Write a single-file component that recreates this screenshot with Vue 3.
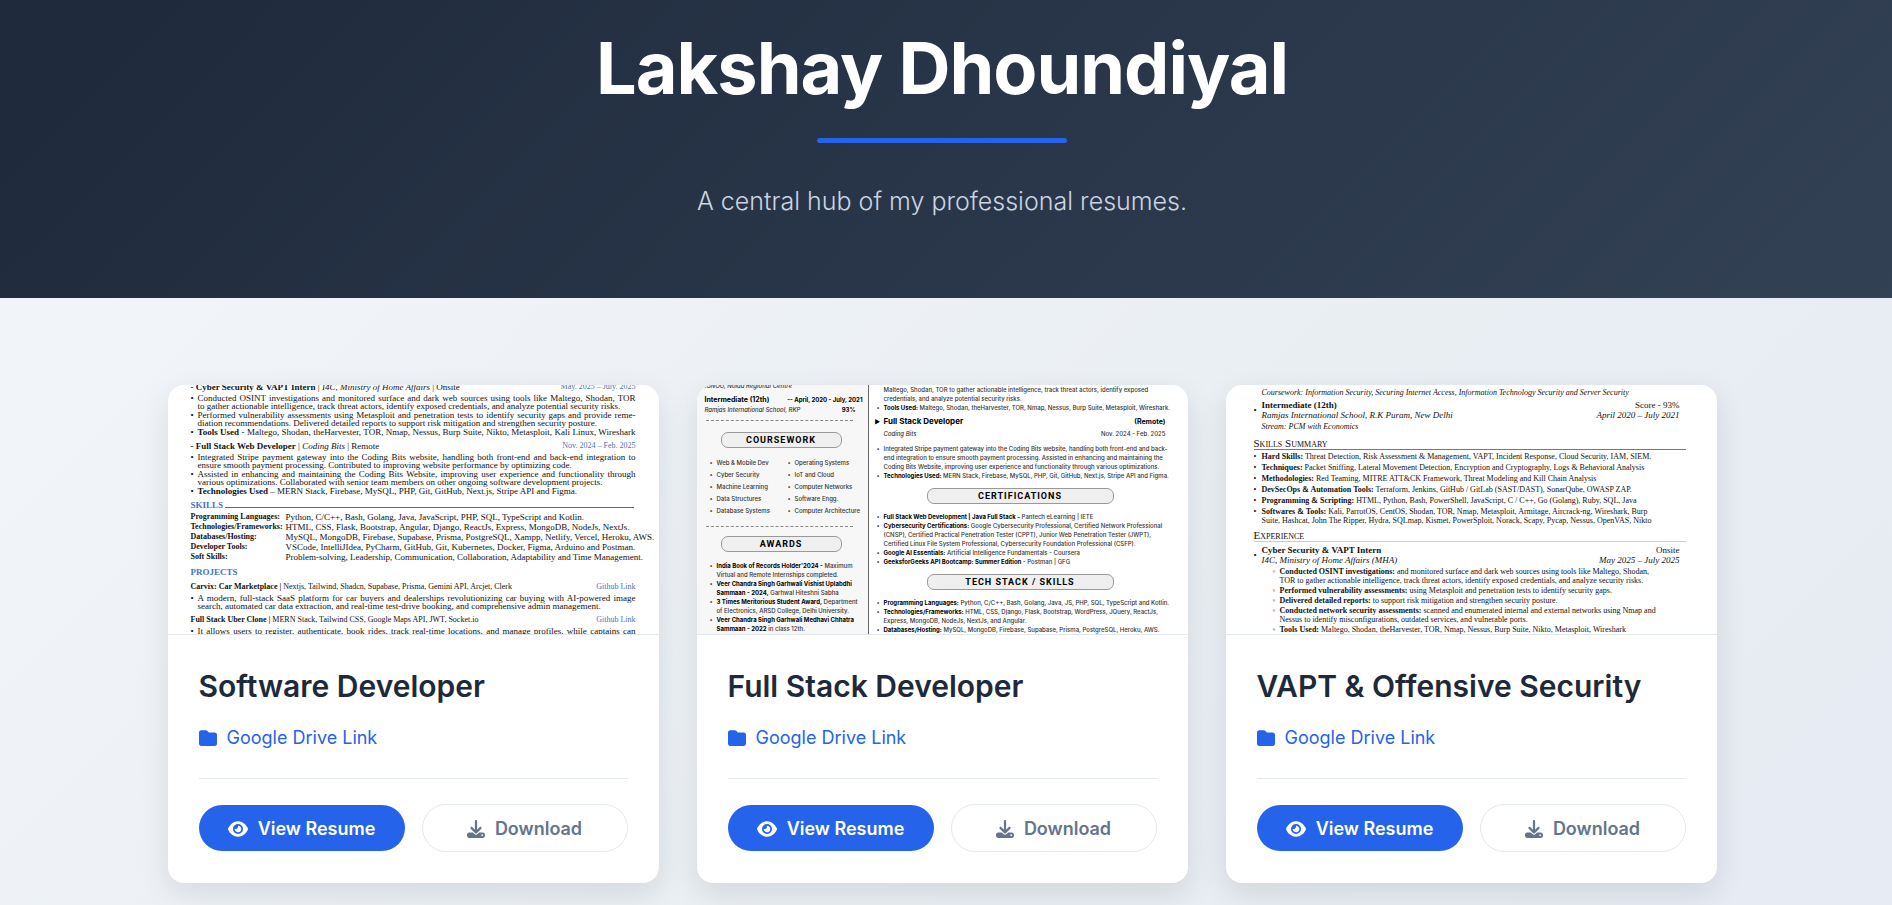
<template>
  <div class="page">
    <header class="hero">
      <h1>Lakshay Dhoundiyal</h1>
      <span class="underline"></span>
      <p>A central hub of my professional resumes.</p>
    </header>

    <main class="cards">
      <article v-for="card in cards" :key="card.id" class="card">
        <div v-if="card.id === 'software'" class="preview latex">
          <div class="row head">
            <span><b>- Cyber Security &amp; VAPT Intern</b> | <i>I4C, Ministry of Home Affairs</i> | Onsite</span>
            <span class="blue">May. 2025 – July. 2025</span>
          </div>
          <ul>
            <li>
              <span class="line full">Conducted OSINT investigations and monitored surface and dark web sources using tools like Maltego, Shodan, TOR</span>
              <span class="line">to gather actionable intelligence, track threat actors, identify exposed credentials, and analyze potential security risks.</span>
            </li>
            <li>
              <span class="line full">Performed vulnerability assessments using Metasploit and penetration tests to identify security gaps and provide reme-</span>
              <span class="line">diation recommendations. Delivered detailed reports to support risk mitigation and strengthen security posture.</span>
            </li>
            <li>
              <span class="line full"><b>Tools Used</b> - Maltego, Shodan, theHarvester, TOR, Nmap, Nessus, Burp Suite, Nikto, Metasploit, Kali Linux, Wireshark</span>
            </li>
          </ul>
          <div class="row job">
            <span><b>- Full Stack Web Developer</b> | <i>Coding Bits</i> | Remote</span>
            <span class="blue">Nov. 2024 – Feb. 2025</span>
          </div>
          <ul>
            <li>
              <span class="line full">Integrated Stripe payment gateway into the Coding Bits website, handling both front-end and back-end integration to</span>
              <span class="line">ensure smooth payment processing. Contributed to improving website performance by optimizing code.</span>
            </li>
            <li>
              <span class="line full">Assisted in enhancing and maintaining the Coding Bits Website, improving user experience and functionality through</span>
              <span class="line">various optimizations. Collaborated with senior team members on other ongoing software development projects.</span>
            </li>
            <li>
              <span class="line"><b>Technologies Used</b> – MERN Stack, Firebase, MySQL, PHP, Git, GitHub, Next.js, Stripe API and Figma.</span>
            </li>
          </ul>
          <div class="section ruled">SKILLS</div>
          <dl>
            <template v-for="skill in softwareSkills" :key="skill.label">
              <dt>{{ skill.label }}:</dt>
              <dd>{{ skill.value }}</dd>
            </template>
          </dl>
          <div class="section">PROJECTS</div>
          <div class="row project">
            <span><b>Carvix: Car Marketplace |</b> Nextjs, Tailwind, Shadcn, Supabase, Prisma, Gemini API, Arcjet, Clerk</span>
            <span class="blue">Github Link</span>
          </div>
          <ul>
            <li>
              <span class="line full">A modern, full-stack SaaS platform for car buyers and dealerships revolutionizing car buying with AI-powered image</span>
              <span class="line">search, automated car data extraction, and real-time test-drive booking, and comprehensive admin management.</span>
            </li>
          </ul>
          <div class="row project next">
            <span><b>Full Stack Uber Clone |</b> MERN Stack, Tailwind CSS, Google Maps API, JWT, Socket.io</span>
            <span class="blue">Github Link</span>
          </div>
          <ul>
            <li>
              <span class="line full">It allows users to register, authenticate, book rides, track real-time locations, and manage profiles, while captains can</span>
            </li>
          </ul>
        </div>

        <div v-else-if="card.id === 'fullstack'" class="preview split">
          <div class="side">
            <div class="campus"><i>IGNOU, Noida Regional Centre</i></div>
            <div class="row degree"><b>Intermediate (12th)</b><b class="small">-- April, 2020 - July, 2021</b></div>
            <div class="row school"><i>Ramjas International School, RKP</i><b class="small">93%</b></div>
            <div class="dashes"></div>
            <div class="pill">COURSEWORK</div>
            <div class="courses">
              <ul>
                <li v-for="course in courses[0]" :key="course">{{ course }}</li>
              </ul>
              <ul>
                <li v-for="course in courses[1]" :key="course">{{ course }}</li>
              </ul>
            </div>
            <div class="dashes"></div>
            <div class="pill awards-pill">AWARDS</div>
            <ul class="awards">
              <li><b>India Book of Records Holder'2024 -</b> Maximum<br />Virtual and Remote Internships completed.</li>
              <li><b>Veer Chandra Singh Garhwali Vishist Uplabdhi<br />Sammaan - 2024,</b> Garhwal Hiteshni Sabha</li>
              <li><b>3 Times Meritorious Student Award,</b> Department<br />of Electronics, ARSD College, Delhi University.</li>
              <li><b>Veer Chandra Singh Garhwali Medhavi Chhatra<br />Sammaan - 2022</b> in class 12th.</li>
            </ul>
          </div>
          <div class="body">
            <ul>
              <li class="bare">Maltego, Shodan, TOR to gather actionable intelligence, track threat actors, identify exposed<br />credentials, and analyze potential security risks.</li>
              <li><b>Tools Used:</b> Maltego, Shodan, theHarvester, TOR, Nmap, Nessus, Burp Suite, Metasploit, Wireshark.</li>
            </ul>
            <div class="row role"><b>Full Stack Developer</b><b class="small">(Remote)</b></div>
            <div class="row employer"><i>Coding Bits</i><span>Nov. 2024 - Feb. 2025</span></div>
            <ul>
              <li>Integrated Stripe payment gateway into the Coding Bits website, handling both front-end and back-<br />end integration to ensure smooth payment processing. Assisted in enhancing and maintaining the<br />Coding Bits Website, improving user experience and functionality through various optimizations.</li>
              <li><b>Technologies Used:</b> MERN Stack, Firebase, MySQL, PHP, Git, GitHub, Next.js, Stripe API and Figma.</li>
            </ul>
            <div class="pill wide">CERTIFICATIONS</div>
            <ul>
              <li><b>Full Stack Web Development | Java Full Stack -</b> Pantech eLearning | IETE</li>
              <li><b>Cybersecurity Certifications:</b> Google Cybersecurity Professional, Certified Network Professional<br />(CNSP), Certified Practical Penetration Tester (CPPT), Junior Web Penetration Tester (JWPT),<br />Certified Linux File System Professional, Cybersecurity Foundation Professional (CSFP).</li>
              <li><b>Google AI Essentials:</b> Artificial Intelligence Fundamentals - Coursera</li>
              <li><b>GeeksforGeeks API Bootcamp: Summer Edition</b> - Postman | GFG</li>
            </ul>
            <div class="pill wide">TECH STACK / SKILLS</div>
            <ul>
              <li><b>Programming Languages:</b> Python, C/C++, Bash, Golang, Java, JS, PHP, SQL, TypeScript and Kotlin.</li>
              <li><b>Technologies/Frameworks:</b> HTML, CSS, Django, Flask, Bootstrap, WordPress, JQuery, ReactJs,<br />Express, MongoDB, NodeJs, NextJs, and Angular.</li>
              <li><b>Databases/Hosting:</b> MySQL, MongoDB, Firebase, Supabase, Prisma, PostgreSQL, Heroku, AWS.</li>
            </ul>
          </div>
        </div>

        <div v-else class="preview academic">
          <div class="coursework"><i>Coursework: Information Security, Securing Internet Access, Information Technology Security and Server Security</i></div>
          <div class="entry">
            <div class="row"><b>Intermediate (12th)</b><span>Score - 93%</span></div>
            <div class="row"><i>Ramjas International School, R.K Puram, New Delhi</i><i>April 2020 – July 2021</i></div>
          </div>
          <div class="stream"><i>Stream: PCM with Economics</i></div>
          <div class="caps">Skills Summary</div>
          <ul class="skills">
            <li v-for="skill in securitySkills" :key="skill.label"><b>{{ skill.label }}:</b> {{ skill.value }}</li>
            <li><b>Softwares &amp; Tools:</b> Kali, ParrotOS, CentOS, Shodan, TOR, Nmap, Metasploit, Armitage, Aircrack-ng, Wireshark, Burp<br />Suite, Hashcat, John The Ripper, Hydra, SQLmap, Kismet, PowerSploit, Norack, Scapy, Pycap, Nessus, OpenVAS, Nikto</li>
          </ul>
          <div class="caps light">Experience</div>
          <div class="entry intern">
            <div class="row"><b>Cyber Security &amp; VAPT Intern</b><span>Onsite</span></div>
            <div class="row"><i>I4C, Ministry of Home Affairs (MHA)</i><i>May 2025 – July 2025</i></div>
          </div>
          <ul class="duties">
            <li><b>Conducted OSINT investigations:</b> and monitored surface and dark web sources using tools like Maltego, Shodan,<br />TOR to gather actionable intelligence, track threat actors, identify exposed credentials, and analyze security risks.</li>
            <li><b>Performed vulnerability assessments:</b> using Metasploit and penetration tests to identify security gaps.</li>
            <li><b>Delivered detailed reports:</b> to support risk mitigation and strengthen security posture.</li>
            <li><b>Conducted network security assessments:</b> scanned and enumerated internal and external networks using Nmap and<br />Nessus to identify misconfigurations, outdated services, and vulnerable ports.</li>
            <li><b>Tools Used:</b> Maltego, Shodan, theHarvester, TOR, Nmap, Nessus, Burp Suite, Nikto, Metasploit, Wireshark</li>
          </ul>
        </div>

        <div class="content">
          <h2>{{ card.title }}</h2>
          <a href="#" class="drive">
            <svg viewBox="0 0 512 512" width="18" height="18" aria-hidden="true">
              <path fill="currentColor" d="M64 480H448c35.300 0 64-28.700 64-64V160c0-35.300-28.700-64-64-64H288c-10.100 0-19.600-4.700-25.600-12.800L243.200 57.600C231.100 41.500 212.100 32 192 32H64C28.700 32 0 60.700 0 96V416c0 35.300 28.700 64 64 64z" />
            </svg>
            Google Drive Link
          </a>
          <div class="actions">
            <button type="button" class="btn primary">
              <svg viewBox="0 0 576 512" width="20" height="18" aria-hidden="true">
                <path fill="currentColor" d="M288 32c-80.800 0-145.500 36.800-192.600 80.600C48.600 156 17.300 208 2.500 243.700c-3.300 7.900-3.300 16.700 0 24.600C17.300 304 48.600 356 95.400 399.400C142.500 443.200 207.200 480 288 480s145.500-36.800 192.600-80.600c46.800-43.500 78.100-95.400 93-131.100c3.300-7.900 3.300-16.700 0-24.600c-14.900-35.700-46.200-87.700-93-131.100C433.500 68.800 368.800 32 288 32zM144 256a144 144 0 1 1 288 0 144 144 0 1 1-288 0zm144-64c0 35.300-28.700 64-64 64c-7.100 0-13.900-1.200-20.300-3.300c-5.500-1.800-11.900 1.600-11.700 7.400c.3 6.900 1.300 13.800 3.200 20.700c13.700 51.200 66.400 81.600 117.600 67.900s81.600-66.400 67.900-117.600c-11.100-41.500-47.800-69.400-88.600-71.100c-5.800-.2-9.200 6.100-7.400 11.700c2.100 6.400 3.300 13.200 3.300 20.300z" />
              </svg>
              View Resume
            </button>
            <button type="button" class="btn outline">
              <svg viewBox="0 0 512 512" width="18" height="18" aria-hidden="true">
                <path fill="currentColor" d="M288 32c0-17.700-14.300-32-32-32s-32 14.300-32 32V274.700l-73.400-73.400c-12.500-12.500-32.800-12.500-45.300 0s-12.500 32.800 0 45.300l128 128c12.500 12.500 32.800 12.500 45.300 0l128-128c12.500-12.500 12.500-32.800 0-45.300s-32.800-12.500-45.300 0L288 274.700V32zM64 352c-35.300 0-64 28.700-64 64v32c0 35.300 28.700 64 64 64H448c35.300 0 64-28.700 64-64V416c0-35.300-28.700-64-64-64H346.500l-45.300 45.300c-25 25-65.500 25-90.500 0L165.500 352H64zm368 56a24 24 0 1 1 0 48 24 24 0 1 1 0-48z" />
              </svg>
              Download
            </button>
          </div>
        </div>
      </article>
    </main>
  </div>
</template>

<script setup>
const cards = [
  { id: 'software', title: 'Software Developer' },
  { id: 'fullstack', title: 'Full Stack Developer' },
  { id: 'security', title: 'VAPT & Offensive Security' },
];

const softwareSkills = [
  { label: 'Programming Languages', value: 'Python, C/C++, Bash, Golang, Java, JavaScript, PHP, SQL, TypeScript and Kotlin.' },
  { label: 'Technologies/Frameworks', value: 'HTML, CSS, Flask, Bootstrap, Angular, Django, ReactJs, Express, MongoDB, NodeJs, NextJs.' },
  { label: 'Databases/Hosting', value: 'MySQL, MongoDB, Firebase, Supabase, Prisma, PostgreSQL, Xampp, Netlify, Vercel, Heroku, AWS.' },
  { label: 'Developer Tools', value: 'VSCode, IntelliJIdea, PyCharm, GitHub, Git, Kubernetes, Docker, Figma, Arduino and Postman.' },
  { label: 'Soft Skills', value: 'Problem-solving, Leadership, Communication, Collaboration, Adaptability and Time Management.' },
];

const courses = [
  ['Web & Mobile Dev', 'Cyber Security', 'Machine Learning', 'Data Structures', 'Database Systems'],
  ['Operating Systems', 'IoT and Cloud', 'Computer Networks', 'Software Engg.', 'Computer Architecture'],
];

const securitySkills = [
  { label: 'Hard Skills', value: 'Threat Detection, Risk Assessment & Management, VAPT, Incident Response, Cloud Security, IAM, SIEM.' },
  { label: 'Techniques', value: 'Packet Sniffing, Lateral Movement Detection, Encryption and Cryptography, Logs & Behavioral Analysis' },
  { label: 'Methodologies', value: 'Red Teaming, MITRE ATT&CK Framework, Threat Modeling and Kill Chain Analysis' },
  { label: 'DevSecOps & Automation Tools', value: 'Terraform, Jenkins, GitHub / GitLab (SAST/DAST), SonarQube, OWASP ZAP.' },
  { label: 'Programming & Scripting', value: 'HTML, Python, Bash, PowerShell, JavaScript, C / C++, Go (Golang), Ruby, SQL, Java' },
];
</script>

<style>
body {
  margin: 0;
}
</style>

<style scoped>
.page {
  min-height: 100vh;
  background: linear-gradient(135deg, #f3f6fb 0%, #e9eef3 65%, #e6ebf4 100%);
  font-family: Inter, "Liberation Sans", sans-serif;
  color: #1e293b;
}

.hero {
  padding: 24px 8px 77px 0;
  display: flex;
  flex-direction: column;
  align-items: center;
  background: linear-gradient(135deg, #1e293b 0%, #334155 100%);
}

h1 {
  margin: 0;
  font-size: 72px;
  line-height: 88px;
  font-weight: 700;
  letter-spacing: -1px;
  color: #fff;
}

.underline {
  width: 250px;
  height: 5px;
  margin-top: 26px;
  border-radius: 3px;
  background: #2563eb;
}

.hero p {
  margin: 38px 0 0;
  font-size: 25px;
  line-height: 40px;
  font-weight: 300;
  color: #cbd5e1;
}

.cards {
  max-width: 1549px;
  margin: 0 auto;
  padding: 87px 8px 22px 0;
  display: grid;
  grid-template-columns: repeat(3, minmax(0, 1fr));
  gap: 38px;
}

.card {
  overflow: hidden;
  border-radius: 16px;
  background: #fff;
  box-shadow: 0 10px 30px rgba(0, 0, 0, 0.1);
}

.content {
  padding: 32px 31px 31px;
}

h2 {
  margin: 0;
  font-size: 30px;
  line-height: 38px;
  font-weight: 600;
}

.drive {
  display: flex;
  align-items: center;
  gap: 10px;
  margin-top: 17px;
  font-size: 18px;
  line-height: 32px;
  color: #2563eb;
  text-decoration: none;
}

.actions {
  display: grid;
  grid-template-columns: 1fr 1fr;
  align-items: center;
  gap: 17px;
  margin-top: 24px;
  padding-top: 25px;
  border-top: 1px solid #e2e8f0;
}

.btn {
  display: flex;
  align-items: center;
  justify-content: center;
  gap: 10px;
  height: 46px;
  padding: 2px 0 0;
  border: none;
  border-radius: 24px;
  font: 600 18px/22px Inter, "Liberation Sans", sans-serif;
  cursor: pointer;
}

.primary {
  background: #2563eb;
  color: #fff;
}

.outline {
  height: 48px;
  border: 1px solid #e2e8f0;
  background: transparent;
  color: #64748b;
}

/* resume previews */
.preview {
  box-sizing: border-box;
  height: 250px;
  overflow: hidden;
  border-bottom: 1px solid #e2e8f0;
  white-space: nowrap;
  color: #111;
}

.preview ul,
.preview dl {
  margin: 0;
  padding: 0;
  list-style: none;
}

.preview dd {
  margin: 0;
}

.row {
  display: flex;
  justify-content: space-between;
}

.blue {
  font-size: 8px;
  color: #4472c4;
}

.latex {
  padding: 0 23px;
  font: 9px/8px "Liberation Serif", serif;
}

.latex .head {
  margin-top: -2px;
}

.latex ul {
  display: grid;
  gap: 1px;
  margin-top: 3px;
}

.latex li {
  position: relative;
  padding-left: 7px;
}

.latex li::before {
  content: "•";
  position: absolute;
  left: 0;
}

.line {
  display: block;
}

.full {
  text-align-last: justify;
}

.latex .job {
  margin-top: 6px;
}

.section {
  display: flex;
  align-items: center;
  gap: 2px;
  margin-top: 6px;
  line-height: 8px;
  font-weight: 700;
  color: #4472c4;
}

.ruled::after {
  content: "";
  flex: 1;
  height: 1px;
  margin: 4px 2px 0 0;
  background: #666;
}

.latex dl {
  display: grid;
  grid-template-columns: 95px 1fr;
  margin-top: 3px;
  line-height: 10px;
}

.latex dt {
  font-size: 8px;
  font-weight: 700;
}

.latex .project {
  margin-top: 7px;
  font-size: 8px;
}

.latex .next {
  margin-top: 6px;
}

.split {
  display: flex;
  font: 500 6px/9px Inter, sans-serif;
  color: #333;
}

.split b {
  color: #000;
}

.side {
  box-sizing: border-box;
  width: 172px;
  padding: 0 5px 0 8px;
  border-right: 1px solid #666;
  background: #f7f7f7;
}

.body {
  flex: 1;
  padding-left: 8px;
}

.campus {
  margin-top: -4px;
}

.degree {
  margin-top: 5px;
  font-size: 7px;
}

.school {
  margin-top: 1px;
  padding-right: 7px;
}

.side .small {
  font-size: 6px;
}

.dashes {
  margin: 6px 10px 0 1px;
  border-top: 1px dashed #888;
}

.pill {
  box-sizing: border-box;
  width: 121px;
  height: 16px;
  margin: 11px auto 0 16px;
  border: 1px solid #999;
  border-radius: 7px;
  background: #efefef;
  font: 700 9px/14px Roboto, sans-serif;
  letter-spacing: 1px;
  text-align: center;
  color: #000;
}

.split li {
  position: relative;
  padding-left: 7px;
}

.split li::before {
  content: "•";
  position: absolute;
  left: 0;
}

.split .bare::before {
  content: none;
}

.courses {
  display: grid;
  grid-template-columns: 78px 1fr;
  margin: 9px 0 9px 5px;
  line-height: 12px;
}

.awards-pill {
  margin-top: 9px;
}

.side .awards {
  margin: 9px 0 0 5px;
}

.role {
  margin-top: 4px;
  padding: 0 22px 0 7px;
  font-size: 8px;
  line-height: 11px;
}

.role b:first-child::before {
  content: "▶";
  position: absolute;
  margin-left: -9px;
  font-size: 6px;
}

.role .small {
  font-size: 7px;
}

.employer {
  margin: 1px 0 4px;
  padding: 0 22px 0 7px;
  line-height: 12px;
}

.wide {
  width: 187px;
  margin: 8px 0 8px 50px;
}

.academic {
  padding: 0 31px 0 28px;
  font: 8px/9px "Liberation Serif", serif;
}

.coursework {
  padding: 3px 0 0 8px;
}

.entry {
  position: relative;
  margin-top: 3px;
  padding: 0 6px 0 8px;
  font-size: 9px;
  line-height: 10px;
}

.entry::before {
  content: "•";
  position: absolute;
  left: 0;
  top: 5px;
}

.stream {
  margin-top: 2px;
  padding-left: 8px;
}

.caps {
  margin-top: 6px;
  border-bottom: 1px solid #777;
  font-size: 11px;
  line-height: 12px;
  font-variant: small-caps;
}

.academic .light {
  margin-top: 4px;
  border-color: #ccc;
}

.academic .skills {
  display: grid;
  gap: 2px;
  padding-top: 2px;
}

.academic li {
  position: relative;
  padding-left: 8px;
}

.academic li::before {
  content: "•";
  position: absolute;
  left: 0;
}

.academic .intern {
  margin-top: 3px;
}

.academic .duties {
  display: grid;
  gap: 1px;
  margin: 2px 0 0 19px;
}

.academic .duties li {
  padding-left: 7px;
}

.academic .duties li::before {
  content: "◦";
}
</style>
